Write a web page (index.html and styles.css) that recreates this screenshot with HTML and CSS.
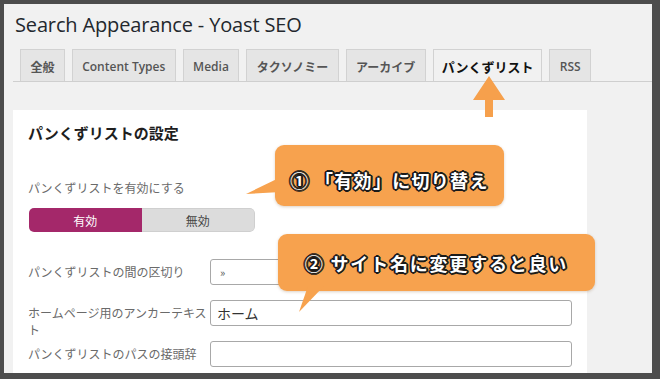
FILE: index.html
```html
<!DOCTYPE html>
<html lang="ja">
<head>
<meta charset="utf-8">
<title>Search Appearance - Yoast SEO</title>
<link rel="stylesheet" href="styles.css">
</head>
<body>
<div class="frame">
  <div class="screen">
    <h1 class="title">Search Appearance - Yoast SEO</h1>
    <nav class="tabs">
      <span class="tab">全般</span>
      <span class="tab">Content Types</span>
      <span class="tab">Media</span>
      <span class="tab">タクソノミー</span>
      <span class="tab">アーカイブ</span>
      <span class="tab active">パンくずリスト</span>
      <span class="tab">RSS</span>
    </nav>
    <section class="panel">
      <h2 class="panel-title">パンくずリストの設定</h2>
      <div class="field-label">パンくずリストを有効にする</div>
      <div class="toggle">
        <span class="toggle-on">有効</span>
        <span class="toggle-off">無効</span>
      </div>
      <div class="rows">
        <div class="row">
          <label class="row-label">パンくずリストの間の区切り</label>
          <div class="input input-sep">»</div>
        </div>
        <div class="row">
          <label class="row-label">ホームページ用のアンカーテキスト</label>
          <div class="input">ホーム</div>
        </div>
        <div class="row">
          <label class="row-label">パンくずリストのパスの接頭辞</label>
          <div class="input"></div>
        </div>
      </div>
    </section>
    <svg class="arrow" width="32" height="41" viewBox="0 0 32 41"><polygon points="16,0 32,24 20,24 20,41 12,41 12,24 0,24" fill="#f6a04c"/></svg>
    <div class="callout callout-1"><span>① 「有効」に切り替え</span></div>
    <div class="callout callout-2"><span>② サイト名に変更すると良い</span></div>
  </div>
</div>
</body>
</html>
```

FILE: styles.css
```css
* { box-sizing: border-box; }
html, body { margin: 0; padding: 0; }
body {
  width: 660px;
  height: 379px;
  overflow: hidden;
  background: #4d4d4d;
  font-family: "Open Sans", "Noto Sans CJK JP", sans-serif;
}
.frame {
  width: 660px;
  height: 379px;
  border-style: solid;
  border-color: #4d4d4d;
  border-width: 4px 8px 6px 4px;
  background: #f1f1f1;
  overflow: hidden;
}
.screen {
  position: relative;
  height: 100%;
  padding-top: 7px;
}
.title {
  margin: 0 0 11px 11px;
  font-size: 20px;
  line-height: 27px;
  font-weight: 400;
  letter-spacing: -0.15px;
  color: #23282d;
  font-family: "Open Sans", "Noto Sans CJK JP", sans-serif;
}
.tabs {
  display: flex;
  gap: 7px;
  margin-left: 9px;
  padding-left: 7px;
  border-bottom: 1px solid #cfcfcf;
  height: 33px;
}
.tab {
  display: flex;
  align-items: center;
  justify-content: center;
  height: 32px;
  padding: 2px 9.4px 0;
  background: #e5e5e5;
  border: 1px solid #d2d2d2;
  border-bottom: none;
  font-size: 12px;
  font-weight: 600;
  color: #555;
  font-family: "Open Sans", "Noto Sans CJK JP", sans-serif;
}
.tab.active {
  background: #f1f1f1;
  color: #111;
  font-weight: 700;
  font-size: 13px;
  padding: 2px 8px 0;
}
.panel {
  margin: 28px 0 0 9px;
  width: 574px;
  height: 300px;
  background: #fff;
  padding: 13px 15px 0 15px;
}
.panel-title {
  margin: 0;
  font-size: 15px;
  line-height: 20px;
  font-weight: 700;
  color: #1e1e1e;
  font-family: "Noto Sans CJK JP", sans-serif;
}
.field-label {
  margin-top: 36px;
  font-size: 12px;
  line-height: 18px;
  color: #6a6a6a;
  font-family: "Noto Sans CJK JP", sans-serif;
}
.toggle {
  margin: 11px 0 0 1px;
  display: flex;
  width: 226px;
  height: 24px;
  border-radius: 5px;
  overflow: hidden;
  font-size: 12px;
  font-family: "Noto Sans CJK JP", sans-serif;
}
.toggle-on, .toggle-off {
  flex: 1;
  display: flex;
  align-items: center;
  justify-content: center;
}
.toggle-on {
  background: #a4286a;
  color: #fff;
}
.toggle-off {
  background: #dcdcdc;
  color: #444;
  border: 1px solid #cfcfcf;
  border-left: none;
  border-radius: 0 5px 5px 0;
}
.rows {
  margin-top: 27px;
  display: flex;
  flex-direction: column;
  gap: 15px;
}
.row {
  display: flex;
  height: 26px;
}
.row-label {
  flex: 0 0 182px;
  padding-top: 4px;
  font-size: 12px;
  line-height: 17px;
  color: #6a6a6a;
  font-family: "Noto Sans CJK JP", sans-serif;
}
.input {
  flex: 1;
  height: 26px;
  border: 1px solid #a8a8a8;
  border-radius: 3px;
  padding: 0 6px;
  display: flex;
  align-items: center;
  font-size: 14px;
  color: #333;
  font-family: "Noto Sans CJK JP", sans-serif;
}
.input-sep {
  font-size: 11px;
  padding-left: 9px;
  color: #555;
}
.arrow {
  position: absolute;
  left: 469px;
  top: 72px;
}
.callout {
  position: absolute;
  background: #f7a24e;
  border-radius: 9px;
  box-shadow: 0 1px 3px rgba(120, 70, 20, 0.25);
  display: flex;
  align-items: center;
  justify-content: center;
  font-family: "Noto Sans CJK JP", sans-serif;
  font-weight: 700;
  font-size: 18px;
  letter-spacing: 1.3px;
  color: #fff;
  text-shadow:
    -2px 0 0 #1b1b1b, 2px 0 0 #1b1b1b, 0 -2px 0 #1b1b1b, 0 2px 0 #1b1b1b,
    -1.4px -1.4px 0 #1b1b1b, 1.4px -1.4px 0 #1b1b1b, -1.4px 1.4px 0 #1b1b1b, 1.4px 1.4px 0 #1b1b1b;
}
.callout::before {
  content: "";
  position: absolute;
  background: #f7a24e;
}
.callout-1 {
  left: 271px;
  top: 141px;
  width: 229px;
  height: 61px;
  padding-top: 8px;
}
.callout-1::before {
  left: -30px;
  top: 32px;
  width: 40px;
  height: 20px;
  clip-path: polygon(36px 0, 1px 17px, 36px 15px);
}
.callout-2 {
  left: 274px;
  top: 230px;
  width: 317px;
  height: 57px;
  padding-top: 1px;
  letter-spacing: 1.8px;
}
.callout-2::before {
  left: 18px;
  top: 52px;
  width: 30px;
  height: 26px;
  clip-path: polygon(12px 0, 28px 0, 3px 26px);
}
```
